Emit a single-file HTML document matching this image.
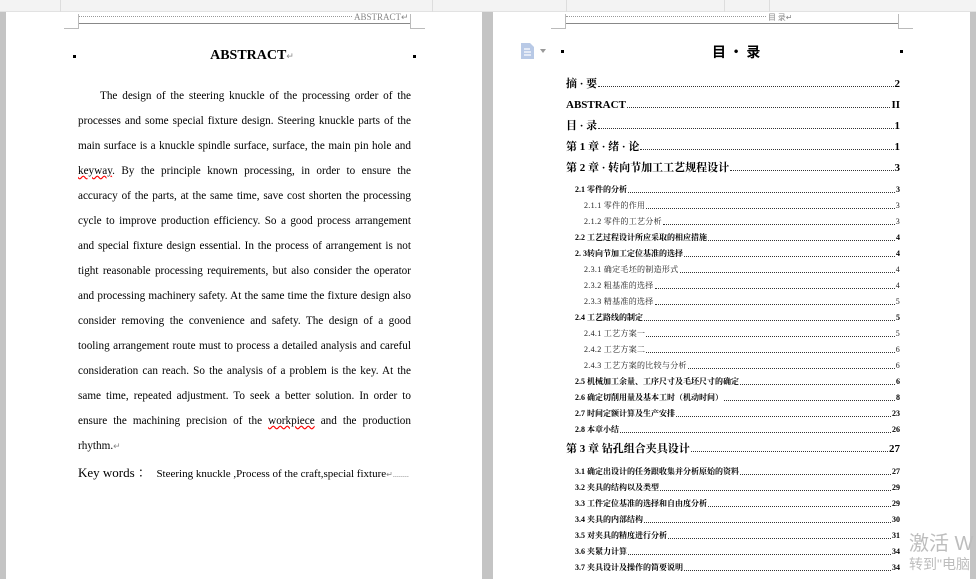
<!DOCTYPE html>
<html><head><meta charset="utf-8"><style>
*{margin:0;padding:0;box-sizing:border-box}
body{width:976px;height:579px;overflow:hidden;background:#c4c4c4;position:relative;font-family:"Liberation Serif","Noto Serif CJK SC",serif;color:#000}
.top{position:absolute;left:0;top:0;width:976px;height:12px;background:#f3f3f3;border-bottom:1px solid #e2e2e2}
.page{position:absolute;top:12px;height:567px;background:#fff}
.hdr-dot{position:absolute;border-top:1px dotted #999;height:0}
.hdr-line{position:absolute;border-top:1px solid #888;height:0}
.corner{position:absolute;width:15px;height:15px;border-color:#bbb;border-style:solid;border-width:0}
.ht{position:absolute;font-size:9px;color:#888;top:12px}
.sq{position:absolute;width:3px;height:3px;background:#000}
.bl{position:absolute;left:78px;width:333px;font-size:11.2px;text-align:justify;text-align-last:justify;white-space:nowrap;line-height:14px}
.bl.nj{text-align-last:left}
.row{position:absolute;display:flex;align-items:flex-end;white-space:nowrap;line-height:12px}
.row .t{flex:none}
.row .d{flex:1;border-bottom:1px dotted #333;margin:0 1px 3px}
.row .p{flex:none}
.l1{left:566px;width:334px;font-size:11px;font-weight:bold}
.l2{left:575px;width:325px;font-size:8px;font-weight:bold}
.l3{left:584px;width:316px;font-size:8px;color:#222;letter-spacing:0.3px}
.wm{position:absolute;color:#bdbdbd;font-family:"Liberation Sans","Noto Sans CJK SC",sans-serif}
</style></head><body>
<div class="top"></div>
<div style="position:absolute;left:60px;top:0;width:1px;height:12px;background:#ddd"></div>
<div style="position:absolute;left:432px;top:0;width:1px;height:12px;background:#ddd"></div>
<div style="position:absolute;left:566px;top:0;width:1px;height:12px;background:#ddd"></div>
<div style="position:absolute;left:724px;top:0;width:1px;height:12px;background:#ddd"></div>
<div style="position:absolute;left:769px;top:0;width:1px;height:12px;background:#ddd"></div>

<div class="page" style="left:6px;width:476px"></div>
<div class="page" style="left:493px;width:477px"></div>

<!-- left header -->
<div class="hdr-dot" style="left:78px;top:16px;width:274px"></div>
<div class="ht" style="left:354px">ABSTRACT↵</div>
<div class="hdr-line" style="left:78px;top:23px;width:332px"></div>
<div class="corner" style="left:64px;top:14px;border-right-width:1px;border-bottom-width:1px"></div>
<div class="corner" style="left:410px;top:14px;border-left-width:1px;border-bottom-width:1px"></div>

<div class="sq" style="left:73px;top:55px"></div>
<div class="sq" style="left:413px;top:55px"></div>
<div style="position:absolute;left:8px;width:488px;text-align:center;top:48px;font-size:14px;font-weight:bold">ABSTRACT<span style="font-weight:normal;color:#888;font-size:9px">↵</span></div>

<div class="bl" style="top:89px;padding-left:22px">The design of the steering knuckle of the processing order of the</div>
<div class="bl" style="top:114px">processes and some special fixture design. Steering knuckle parts of the</div>
<div class="bl" style="top:139px">main surface is a knuckle spindle surface, surface, the main pin hole and</div>
<div class="bl" style="top:164px"><span style="text-decoration:underline wavy red">keyway</span>. By the principle known processing, in order to ensure the</div>
<div class="bl" style="top:189px">accuracy of the parts, at the same time, save cost shorten the processing</div>
<div class="bl" style="top:214px">cycle to improve production efficiency. So a good process arrangement</div>
<div class="bl" style="top:239px">and special fixture design essential. In the process of arrangement is not</div>
<div class="bl" style="top:264px">tight reasonable processing requirements, but also consider the operator</div>
<div class="bl" style="top:289px">and processing machinery safety. At the same time the fixture design also</div>
<div class="bl" style="top:314px">consider removing the convenience and safety. The design of a good</div>
<div class="bl" style="top:339px">tooling arrangement route must to process a detailed analysis and careful</div>
<div class="bl" style="top:364px">consideration can reach. So the analysis of a problem is the key. At the</div>
<div class="bl" style="top:389px">same time, repeated adjustment. To seek a better solution. In order to</div>
<div class="bl" style="top:414px">ensure the machining precision of the <span style="text-decoration:underline wavy red">workpiece</span> and the production</div>
<div class="bl nj" style="top:439px">rhythm.<span style="color:#888;font-size:9px">↵</span></div>
<div style="position:absolute;left:78px;top:462px;font-size:13px;white-space:nowrap">Key words ：<span style="font-size:11px"> &nbsp;Steering knuckle ,Process of the craft,special fixture<span style="color:#888;font-size:8px">↵........</span></span></div>

<!-- right header -->
<div class="hdr-dot" style="left:566px;top:16px;width:200px"></div>
<div class="ht" style="left:768px;font-family:'Noto Sans CJK SC',sans-serif;font-size:8px">目 录↵</div>
<div class="hdr-line" style="left:566px;top:23px;width:332px"></div>
<div class="corner" style="left:551px;top:14px;border-right-width:1px;border-bottom-width:1px"></div>
<div class="corner" style="left:898px;top:14px;border-left-width:1px;border-bottom-width:1px"></div>

<svg style="position:absolute;left:520px;top:43px" width="15" height="16"><path d="M1 0h9l4 4v12H1z" fill="#b8c9e6"/><path d="M4 6h6M4 9h7M4 12h7" stroke="#fff" stroke-width="1.3"/></svg>
<div style="position:absolute;left:540px;top:49px;border:3px solid transparent;border-top:4px solid #999"></div>
<div class="sq" style="left:561px;top:50px"></div>
<div class="sq" style="left:900px;top:50px"></div>
<div style="position:absolute;left:712px;top:42px;font-size:14px;font-weight:bold;font-family:'Noto Sans CJK SC',sans-serif">目 · 录</div>

<div class="row l1" style="top:78px"><span class="t">摘 · 要</span><span class="d"></span><span class="p">2</span></div>
<div class="row l1" style="top:99px"><span class="t">ABSTRACT</span><span class="d"></span><span class="p">II</span></div>
<div class="row l1" style="top:120px"><span class="t">目 · 录</span><span class="d"></span><span class="p">1</span></div>
<div class="row l1" style="top:141px"><span class="t">第 1 章 · 绪 · 论</span><span class="d"></span><span class="p">1</span></div>
<div class="row l1" style="top:162px"><span class="t">第 2 章 · 转向节加工工艺规程设计</span><span class="d"></span><span class="p">3</span></div>
<div class="row l2" style="top:184px"><span class="t">2.1 零件的分析</span><span class="d"></span><span class="p">3</span></div>
<div class="row l3" style="top:200px"><span class="t">2.1.1 零件的作用</span><span class="d"></span><span class="p">3</span></div>
<div class="row l3" style="top:216px"><span class="t">2.1.2 零件的工艺分析</span><span class="d"></span><span class="p">3</span></div>
<div class="row l2" style="top:232px"><span class="t">2.2 工艺过程设计所应采取的相应措施</span><span class="d"></span><span class="p">4</span></div>
<div class="row l2" style="top:248px"><span class="t">2. 3转向节加工定位基准的选择</span><span class="d"></span><span class="p">4</span></div>
<div class="row l3" style="top:264px"><span class="t">2.3.1 确定毛坯的制造形式</span><span class="d"></span><span class="p">4</span></div>
<div class="row l3" style="top:280px"><span class="t">2.3.2 粗基准的选择</span><span class="d"></span><span class="p">4</span></div>
<div class="row l3" style="top:296px"><span class="t">2.3.3 精基准的选择</span><span class="d"></span><span class="p">5</span></div>
<div class="row l2" style="top:312px"><span class="t">2.4 工艺路线的制定</span><span class="d"></span><span class="p">5</span></div>
<div class="row l3" style="top:328px"><span class="t">2.4.1 工艺方案一</span><span class="d"></span><span class="p">5</span></div>
<div class="row l3" style="top:344px"><span class="t">2.4.2 工艺方案二</span><span class="d"></span><span class="p">6</span></div>
<div class="row l3" style="top:360px"><span class="t">2.4.3 工艺方案的比较与分析</span><span class="d"></span><span class="p">6</span></div>
<div class="row l2" style="top:376px"><span class="t">2.5 机械加工余量、工序尺寸及毛坯尺寸的确定</span><span class="d"></span><span class="p">6</span></div>
<div class="row l2" style="top:392px"><span class="t">2.6 确定切削用量及基本工时（机动时间）</span><span class="d"></span><span class="p">8</span></div>
<div class="row l2" style="top:408px"><span class="t">2.7 时间定额计算及生产安排</span><span class="d"></span><span class="p">23</span></div>
<div class="row l2" style="top:424px"><span class="t">2.8 本章小结</span><span class="d"></span><span class="p">26</span></div>
<div class="row l1" style="top:443px"><span class="t">第 3 章 钻孔组合夹具设计</span><span class="d"></span><span class="p">27</span></div>
<div class="row l2" style="top:466px"><span class="t">3.1 确定出设计的任务跟收集并分析原始的资料</span><span class="d"></span><span class="p">27</span></div>
<div class="row l2" style="top:482px"><span class="t">3.2 夹具的结构以及类型</span><span class="d"></span><span class="p">29</span></div>
<div class="row l2" style="top:498px"><span class="t">3.3 工件定位基准的选择和自由度分析</span><span class="d"></span><span class="p">29</span></div>
<div class="row l2" style="top:514px"><span class="t">3.4 夹具的内部结构</span><span class="d"></span><span class="p">30</span></div>
<div class="row l2" style="top:530px"><span class="t">3.5 对夹具的精度进行分析</span><span class="d"></span><span class="p">31</span></div>
<div class="row l2" style="top:546px"><span class="t">3.6 夹紧力计算</span><span class="d"></span><span class="p">34</span></div>
<div class="row l2" style="top:562px"><span class="t">3.7 夹具设计及操作的简要说明</span><span class="d"></span><span class="p">34</span></div>

<div class="wm" style="left:909px;top:527px;font-size:20px">激活 W</div>
<div class="wm" style="left:909px;top:554px;font-size:14px">转到"电脑</div>
</body></html>
